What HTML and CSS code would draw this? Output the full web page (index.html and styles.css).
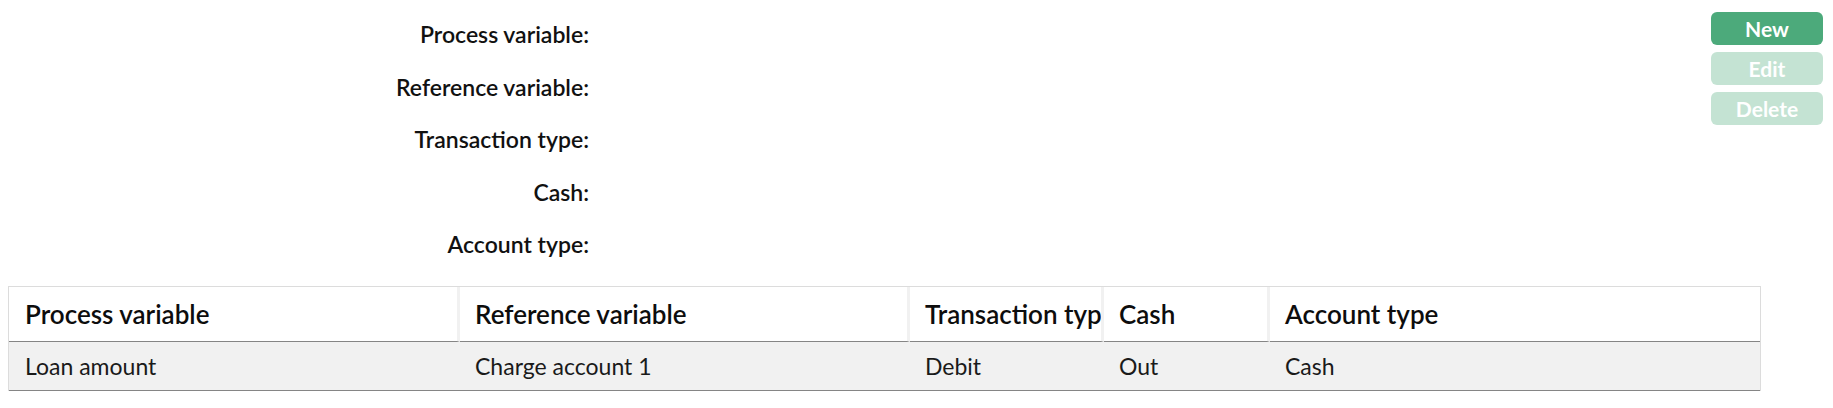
FILE: index.html
```html
<!DOCTYPE html>
<html>
<head>
<meta charset="utf-8">
<link rel="stylesheet" href="styles.css">
</head>
<body>
<div class="top">
  <div class="form">
    <div class="label">Process variable:</div><div class="value"></div>
    <div class="label">Reference variable:</div><div class="value"></div>
    <div class="label">Transaction type:</div><div class="value"></div>
    <div class="label">Cash:</div><div class="value"></div>
    <div class="label">Account type:</div><div class="value"></div>
  </div>
  <div class="actions">
    <button class="btn">New</button>
    <button class="btn disabled">Edit</button>
    <button class="btn disabled">Delete</button>
  </div>
</div>
<table class="grid">
  <colgroup>
    <col class="c1"><col class="c2"><col class="c3"><col class="c4"><col class="c5">
  </colgroup>
  <thead>
    <tr>
      <th>Process variable</th>
      <th>Reference variable</th>
      <th>Transaction type</th>
      <th>Cash</th>
      <th class="last">Account type</th>
    </tr>
  </thead>
  <tbody>
    <tr>
      <td>Loan amount</td>
      <td>Charge account 1</td>
      <td>Debit</td>
      <td>Out</td>
      <td>Cash</td>
    </tr>
  </tbody>
</table>
</body>
</html>
```
FILE: styles.css
```css
html, body {
  margin: 0;
  padding: 0;
  background: #ffffff;
}
body {
  margin: 8px;
  font-family: Lato, "Open Sans", sans-serif;
  color: #111;
}
.top {
  display: flex;
  align-items: flex-start;
}
.form {
  flex: 1;
  display: grid;
  grid-template-columns: 581px 1fr;
  grid-auto-rows: 52.5px;
}
.label {
  justify-self: end;
  font-size: 23px;
  font-weight: 600;
  line-height: 52px;
  white-space: nowrap;
}
.actions {
  width: 112px;
  margin-right: 2px;
  margin-top: 4px;
  display: flex;
  flex-direction: column;
  gap: 7px;
}
.btn {
  height: 33px;
  border: none;
  border-radius: 6px;
  background: #4caa7b;
  color: #fff;
  font-family: Lato, "Open Sans", sans-serif;
  font-size: 21px;
  font-weight: 700;
  line-height: 31px;
  padding: 0;
}
.btn.disabled {
  background: #c4e3d3;
}
.grid {
  margin-top: 15px;
  width: 1753px;
  table-layout: fixed;
  border-collapse: separate;
  border-spacing: 0;
  border: 1px solid #dcdcdc;
  border-bottom: none;
}
.c1 { width: 451px; }
.c2 { width: 450px; }
.c3 { width: 194px; }
.c4 { width: 166px; }
.c5 { width: 490px; }
.grid th {
  text-align: left;
  font-size: 26px;
  font-weight: 600;
  height: 54px;
  line-height: 54px;
  padding: 0 0 0 15px;
  white-space: nowrap;
  overflow: hidden;
  border-right: 3px solid #f1f1f1;
  border-bottom: 1px solid #858585;
  color: #0d0d0d;
}
.grid th:first-child {
  padding-left: 16px;
}
.grid th.last {
  border-right: none;
}
.grid td {
  background: #f1f1f1;
  font-size: 23px;
  font-weight: 400;
  height: 48px;
  line-height: 48px;
  padding: 0 0 0 15px;
  border-bottom: 1px solid #858585;
  white-space: nowrap;
  overflow: hidden;
  color: #1a1a1a;
}
.grid td:first-child {
  padding-left: 16px;
}
```
